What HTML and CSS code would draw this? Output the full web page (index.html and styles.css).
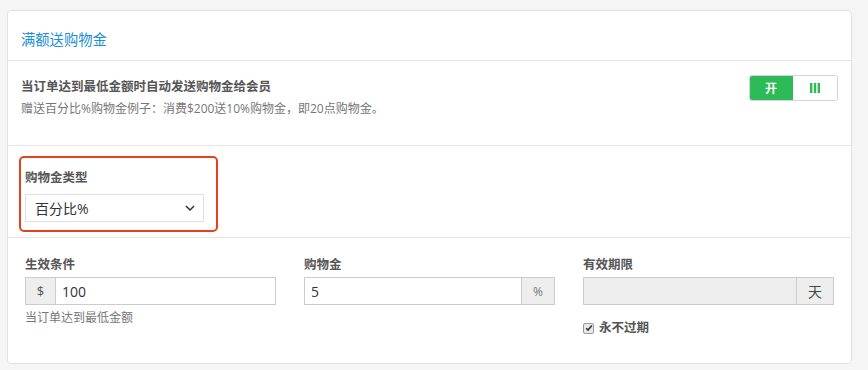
FILE: index.html
```html
<!DOCTYPE html>
<html lang="zh-CN">
<head>
    <meta charset="UTF-8">
    <title>满额送购物金</title>
    <link rel="stylesheet" href="styles.css">
</head>
<body>
    <div class="panel">
        <div class="panel-heading">满额送购物金</div>

        <div class="section section-switch">
            <div class="switch-text">
                <div class="switch-title">当订单达到最低金额时自动发送购物金给会员</div>
                <div class="switch-desc">赠送百分比%购物金例子：消费$200送10%购物金，即20点购物金。</div>
            </div>
            <div class="toggle">
                <span class="toggle-on">开</span>
                <span class="toggle-off">
                    <svg width="10" height="10" viewBox="0 0 10 10"><rect x="0" y="0" width="2.4" height="10" fill="#2dbb57"/><rect x="3.8" y="0" width="2.4" height="10" fill="#2dbb57"/><rect x="7.6" y="0" width="2.4" height="10" fill="#2dbb57"/></svg>
                </span>
            </div>
        </div>

        <div class="section section-type">
            <div class="highlight">
                <div class="field-label">购物金类型</div>
                <div class="select">
                    <span>百分比%</span>
                    <svg width="10" height="6" viewBox="0 0 10 6"><path d="M1 1l4 4 4-4" fill="none" stroke="#333" stroke-width="1.5"/></svg>
                </div>
            </div>
        </div>

        <div class="section section-fields">
            <div class="field">
                <div class="field-label">生效条件</div>
                <div class="input-group">
                    <span class="addon addon-left">$</span>
                    <span class="input">100</span>
                </div>
                <div class="help">当订单达到最低金额</div>
            </div>
            <div class="field">
                <div class="field-label">购物金</div>
                <div class="input-group">
                    <span class="input">5</span>
                    <span class="addon addon-right addon-pct">%</span>
                </div>
            </div>
            <div class="field">
                <div class="field-label">有效期限</div>
                <div class="input-group">
                    <span class="input input-disabled"></span>
                    <span class="addon addon-right addon-day">天</span>
                </div>
                <label class="check">
                    <span class="checkbox">
                        <svg width="8" height="8" viewBox="0 0 8 8"><path d="M1.2 4.2l1.8 1.8 3.8-4.4" fill="none" stroke="#333" stroke-width="1.6"/></svg>
                    </span>
                    永不过期
                </label>
            </div>
        </div>
    </div>
</body>
</html>
```

FILE: styles.css
```css
body {
    margin: 0;
    padding: 10px 0 0 7px;
    background-color: #f5f5f5;
    font-family: "Open Sans", "Noto Sans CJK SC", sans-serif;
    color: #333;
}
.panel {
    width: 843px;
    background-color: #fff;
    border: 1px solid #e2e2e2;
    border-radius: 4px;
}
.panel-heading {
    padding: 19px 13px 10px;
    line-height: 20px;
    font-size: 14.3px;
    color: #1a8fd6;
    border-bottom: 1px solid #e6e6e6;
}
.section {
    border-bottom: 1px solid #e6e6e6;
}
.section:last-child {
    border-bottom: none;
}
.section-switch {
    display: flex;
    justify-content: space-between;
    align-items: flex-start;
    padding: 14px 13px 27px;
}
.switch-title {
    margin-top: 2px;
    line-height: 20px;
    font-size: 12.5px;
    font-weight: 700;
    color: #555;
}
.switch-desc {
    margin-top: 3px;
    line-height: 18px;
    font-size: 12px;
    color: #777;
}
.toggle {
    display: flex;
    width: 89px;
    height: 26px;
    box-sizing: border-box;
    border: 1px solid #d5d5d5;
    border-radius: 3px;
    overflow: hidden;
}
.toggle-on {
    width: 44px;
    margin: -1px 0 -1px -1px;
    background-color: #2dbb57;
    color: #fff;
    font-size: 12px;
    font-weight: 700;
    display: flex;
    align-items: center;
    justify-content: center;
}
.toggle-off {
    flex: 1;
    display: flex;
    align-items: center;
    justify-content: center;
}
.section-type {
    padding: 10px 11px 5px;
}
.highlight {
    width: 199px;
    box-sizing: border-box;
    padding: 11px 12px 8px 4px;
    border: 2px solid #e8401c;
    border-radius: 5px;
}
.field-label {
    line-height: 18px;
    font-size: 12.5px;
    font-weight: 700;
    color: #555;
}
.select {
    display: flex;
    align-items: center;
    justify-content: space-between;
    height: 28px;
    margin-top: 7px;
    padding: 0 8px 0 9px;
    box-sizing: border-box;
    border: 1px solid #e0e0e0;
    font-size: 14px;
    color: #333;
}
.section-fields {
    display: grid;
    grid-template-columns: repeat(3, 251px);
    column-gap: 28px;
    align-items: start;
    padding: 18px 17px 26px;
}
.input-group {
    display: flex;
    height: 28px;
    margin-top: 3px;
    box-sizing: border-box;
    border: 1px solid #ccc;
}
.addon {
    display: flex;
    align-items: center;
    justify-content: center;
    background-color: #eee;
    color: #555;
    font-size: 13px;
}
.addon-left {
    width: 29px;
    border-right: 1px solid #ccc;
}
.addon-right {
    border-left: 1px solid #ccc;
}
.addon-pct {
    width: 32px;
    font-size: 12px;
    color: #777;
}
.addon-day {
    width: 36px;
    font-size: 14px;
    color: #444;
}
.input {
    flex: 1;
    display: flex;
    align-items: center;
    padding-left: 6px;
    font-size: 14px;
    color: #333;
}
.input-disabled {
    background-color: #eee;
}
.help {
    margin-top: 4px;
    line-height: 18px;
    font-size: 12px;
    color: #777;
}
.check {
    display: flex;
    align-items: center;
    margin-top: 14px;
    line-height: 18px;
    font-size: 12.5px;
    font-weight: 700;
    color: #555;
}
.checkbox {
    display: flex;
    align-items: center;
    justify-content: center;
    width: 9px;
    height: 9px;
    margin: 0 5px 0 0;
    border: 1px solid #999;
    border-radius: 2px;
    background-color: #e8e8e8;
}
```
